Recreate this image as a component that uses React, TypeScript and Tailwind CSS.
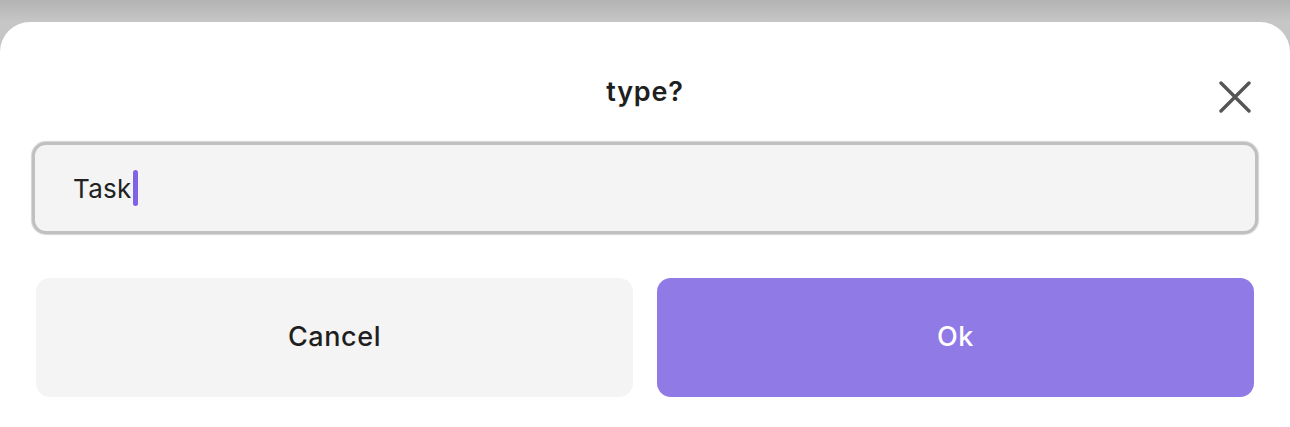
import React from 'react';

export default function App() {
  return (
    <div className="w-[1290px] h-[427px] bg-[linear-gradient(to_bottom,#b3b3b3,#c6c6c6_22px)] pt-[22px] overflow-hidden" style={{ fontFamily: 'Inter, "Noto Sans", sans-serif' }}>
      <div className="h-[420px] bg-white rounded-t-[30px] pt-[54px]">
        {/* header */}
        <div className="relative h-[32px] flex items-center justify-center">
          <h2 className="text-[27px] font-semibold text-[#1f1f1f] tracking-[0.8px]">type?</h2>
          <button className="absolute right-[38px] top-[4px] w-[34px] h-[34px] flex items-center justify-center text-[#555555]">
            <svg width="32" height="32" viewBox="0 0 32 32" fill="none" stroke="currentColor" strokeWidth="3.4" strokeLinecap="round">
              <path d="M2 2L30 30M30 2L2 30" />
            </svg>
          </button>
        </div>

        {/* input */}
        <div className="px-[32px] mt-[34px]">
          <div className="h-[92px] rounded-[14px] border-[3px] border-[#c0c0c0] bg-[#f4f4f4] flex items-center pl-[38px] shadow-[0_0_1px_1px_#d4d4d4]">
            <span className="text-[26px] text-[#222222] tracking-[0.3px]">Task</span>
            <span className="ml-[1px] w-[5px] h-[36px] rounded-full bg-[#7f63e6]" />
          </div>
        </div>

        {/* actions */}
        <div className="px-[36px] mt-[44px] grid grid-cols-2 gap-[24px]">
          <button className="h-[119px] rounded-[14px] bg-[#f4f4f4] text-[27px] text-[#1f1f1f] font-[450] tracking-[0.6px]">Cancel</button>
          <button className="h-[119px] rounded-[14px] bg-[#8f7ae6] text-[27px] text-white font-[450] tracking-[0.6px]">Ok</button>
        </div>
      </div>
    </div>
  );
}
